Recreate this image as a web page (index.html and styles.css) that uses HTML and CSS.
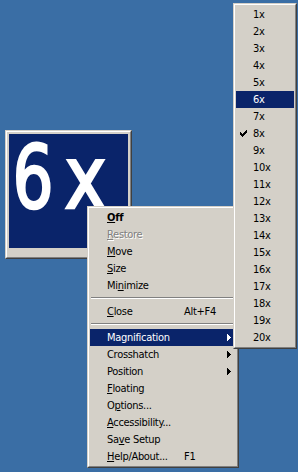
FILE: index.html
```html
<!DOCTYPE html>
<html>
<head>
<meta charset="utf-8">
<link rel="stylesheet" href="styles.css">
</head>
<body>
<div class="magwin">
  <div class="frame">
    <div class="view">
      <svg class="magsvg" width="119" height="114" viewBox="0 0 119 114">
        <text class="magtext" x="3.5" y="74" textLength="41" lengthAdjust="spacingAndGlyphs">6</text>
        <text class="magtext" x="55.5" y="74" textLength="42" lengthAdjust="spacingAndGlyphs">x</text>
      </svg>
    </div>
  </div>
</div>

<div class="menu main">
  <div class="menu-in">
    <div class="item bold"><span class="label"><u>O</u>ff</span></div>
    <div class="item disabled"><span class="label"><u>R</u>estore</span></div>
    <div class="item"><span class="label"><u>M</u>ove</span></div>
    <div class="item"><span class="label"><u>S</u>ize</span></div>
    <div class="item"><span class="label">Mi<u>n</u>imize</span></div>
    <div class="sep"><div class="line"></div></div>
    <div class="item"><span class="label"><u>C</u>lose</span><span class="accel">Alt+F4</span></div>
    <div class="sep"><div class="line"></div></div>
    <div class="item hl"><span class="label">Magnification</span><svg class="arrow" width="4" height="7" viewBox="0 0 4 7"><path d="M0 0h1v7h-1zM1 1h1v5h-1zM2 2h1v3h-1zM3 3h1v1h-1z"/></svg></div>
    <div class="item"><span class="label">Crosshatch</span><svg class="arrow" width="4" height="7" viewBox="0 0 4 7"><path d="M0 0h1v7h-1zM1 1h1v5h-1zM2 2h1v3h-1zM3 3h1v1h-1z"/></svg></div>
    <div class="item"><span class="label">Position</span><svg class="arrow" width="4" height="7" viewBox="0 0 4 7"><path d="M0 0h1v7h-1zM1 1h1v5h-1zM2 2h1v3h-1zM3 3h1v1h-1z"/></svg></div>
    <div class="item"><span class="label"><u>F</u>loating</span></div>
    <div class="item"><span class="label">O<u>p</u>tions...</span></div>
    <div class="item"><span class="label"><u>A</u>ccessibility...</span></div>
    <div class="item"><span class="label">Sa<u>v</u>e Setup</span></div>
    <div class="item"><span class="label"><u>H</u>elp/About...</span><span class="accel">F1</span></div>
  </div>
</div>

<div class="menu sub">
  <div class="menu-in">
    <div class="item">1x</div>
    <div class="item">2x</div>
    <div class="item">3x</div>
    <div class="item">4x</div>
    <div class="item">5x</div>
    <div class="item hl">6x</div>
    <div class="item">7x</div>
    <div class="item"><svg class="check" width="7" height="7" viewBox="0 0 7 7"><path d="M6 0h1v1h-1zM5 1h2v1h-2zM0 2h1v1h-1zM4 2h3v1h-3zM0 3h2v1h-2zM3 3h3v1h-3zM0 4h5v1h-5zM1 5h3v1h-3zM2 6h1v1h-1z"/></svg>8x</div>
    <div class="item">9x</div>
    <div class="item">10x</div>
    <div class="item">11x</div>
    <div class="item">12x</div>
    <div class="item">13x</div>
    <div class="item">14x</div>
    <div class="item">15x</div>
    <div class="item">16x</div>
    <div class="item">17x</div>
    <div class="item">18x</div>
    <div class="item">19x</div>
    <div class="item">20x</div>
  </div>
</div>
</body>
</html>
```
FILE: styles.css
```css
html, body {
  margin: 0;
  padding: 0;
}
body {
  width: 298px;
  height: 472px;
  overflow: hidden;
  position: relative;
  background: #3a6ea5;
  font-family: "DejaVu Sans Condensed", "DejaVu Sans", sans-serif;
  font-stretch: condensed;
  font-size: 11px;
  letter-spacing: -0.3px;
  color: #000;
}

/* magnifier window */
.magwin {
  position: absolute;
  left: 5px;
  top: 130px;
  width: 127px;
  height: 129px;
  box-sizing: border-box;
  border: 1px solid;
  border-color: #d4d0c8 #404040 #404040 #d4d0c8;
  background: #d4d0c8;
}
.frame {
  height: 100%;
  box-sizing: border-box;
  border: 1px solid;
  border-color: #ffffff #808080 #808080 #ffffff;
  padding: 2px 2px 9px;
}
.view {
  height: 114px;
  background: #0a246a;
}
.magsvg {
  display: block;
  overflow: visible;
}
.magtext {
  font-family: "DejaVu Sans", sans-serif;
  font-size: 88px;
  fill: #ffffff;
  stroke: #ffffff;
  stroke-width: 2.5px;
  letter-spacing: 0;
}

/* menus */
.menu {
  position: absolute;
  box-sizing: border-box;
  background: #d4d0c8;
  border: 1px solid;
  border-color: #d4d0c8 #404040 #404040 #d4d0c8;
}
.menu-in {
  border: 1px solid;
  border-color: #ffffff #808080 #808080 #ffffff;
  padding: 1px;
}
.main {
  left: 87px;
  top: 206px;
  width: 152px;
}
.sub {
  left: 233px;
  top: 3px;
  width: 64px;
}
.item {
  position: relative;
  display: flex;
  align-items: center;
  height: 17px;
  line-height: 17px;
  padding-left: 17px;
  white-space: nowrap;
}
.item u {
  text-decoration: underline;
  text-underline-offset: 1px;
}
.main .label {
  width: 77px;
  flex: none;
}
.item.bold {
  font-weight: bold;
}
.item.disabled {
  color: #808080;
  text-shadow: 1px 1px 0 #ffffff;
}
.item.hl {
  background: #0a246a;
  color: #ffffff;
}
.arrow {
  margin-left: auto;
  margin-right: 5px;
  fill: #000;
}
.item.hl .arrow {
  fill: #ffffff;
}
.check {
  position: absolute;
  left: 4px;
  top: 5px;
  fill: #000;
}
.sep {
  height: 9px;
  box-sizing: border-box;
  padding: 3px 1px 0;
}
.sep .line {
  border-top: 1px solid #808080;
  border-bottom: 1px solid #ffffff;
}
```
